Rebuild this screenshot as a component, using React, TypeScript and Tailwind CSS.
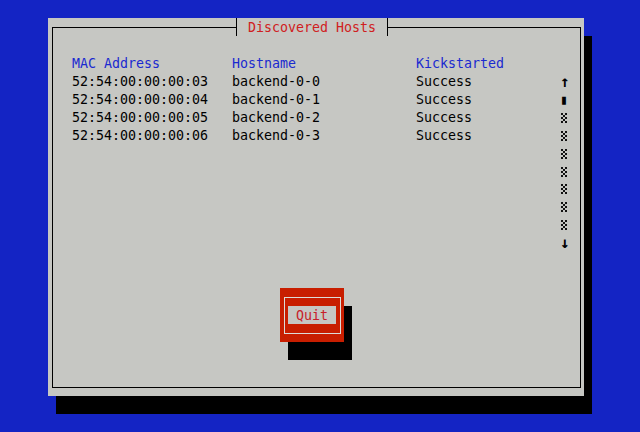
const hosts = [
  { mac: '52:54:00:00:00:03', name: 'backend-0-0', status: 'Success' },
  { mac: '52:54:00:00:00:04', name: 'backend-0-1', status: 'Success' },
  { mac: '52:54:00:00:00:05', name: 'backend-0-2', status: 'Success' },
  { mac: '52:54:00:00:00:06', name: 'backend-0-3', status: 'Success' },
];

const mono = "font-['DejaVu_Sans_Mono','Liberation_Mono',monospace] text-[13.3px] leading-[18px]";

// ▒ shade cell of the scrollbar track
function Shade() {
  return (
    <span className="h-[18px] flex items-center justify-center">
      <svg width="6" height="10" viewBox="0 0 6 10" shapeRendering="crispEdges">
        {[0, 2, 4, 6, 8].map((y) =>
          [0, 2, 4].map((x) =>
            ((x + y) / 2) % 2 === 0 ? <rect key={`${x}-${y}`} x={x} y={y} width="2" height="2" fill="#111" /> : null
          )
        )}
      </svg>
    </span>
  );
}

function App() {
  return (
    <div className={`w-[640px] h-[432px] bg-[#1424c4] pt-[18px] pl-[48px] overflow-hidden ${mono}`}>
      {/* Dialog window */}
      <div className="relative w-[536px] h-[378px] bg-[#c6c7c3] shadow-[8px_18px_0_0_#000] pt-[9px] pl-[4px]">
        <div className="w-[529px] h-[361px] border border-black flex flex-col pl-[19px] pt-[27px]">
          {/* Table header + list */}
          <div className="flex h-[197px]">
            <div className="flex flex-col w-[488px]">
              <div className="flex text-[#1a2ad0] whitespace-pre">
                <span className="w-[160px]">MAC Address</span>
                <span className="w-[184px]">Hostname</span>
                <span>Kickstarted</span>
              </div>
              {hosts.map((h) => (
                <div key={h.mac} className="flex text-black whitespace-pre">
                  <span className="w-[160px]">{h.mac}</span>
                  <span className="w-[184px]">{h.name}</span>
                  <span>{h.status}</span>
                </div>
              ))}
            </div>
            {/* Scrollbar */}
            <div className="flex flex-col w-[8px] mt-[18px] text-black text-center">
              <span className="h-[18px] text-[16px] font-bold">↑</span>
              <span className="h-[18px]">▮</span>
              <Shade />
              <Shade />
              <Shade />
              <Shade />
              <Shade />
              <Shade />
              <Shade />
              <span className="h-[18px] text-[16px] font-bold">↓</span>
            </div>
          </div>

          {/* Quit button */}
          <div className="mt-[36px] ml-[208px]">
            <div className="w-[64px] h-[54px] bg-[#c81e00] shadow-[8px_18px_0_0_#000] pt-[9px] pl-[4px]">
              <div className="w-[57px] h-[37px] border border-[#dcdcd8] pt-[8px] pl-[3px]">
                <div className="w-[48px] h-[18px] bg-[#c6c7c3] pl-[8px] pt-[1px] leading-[17px] text-[#c8202a]">Quit</div>
              </div>
            </div>
          </div>
        </div>

        {/* Title over the top border */}
        <div className="absolute left-[188px] top-0 h-[18px] bg-[#c6c7c3] border-x border-black px-[11px] pt-[1px] leading-[17px] text-[#d02020] whitespace-pre">
          Discovered Hosts
        </div>
      </div>
    </div>
  );
}

export default App;
